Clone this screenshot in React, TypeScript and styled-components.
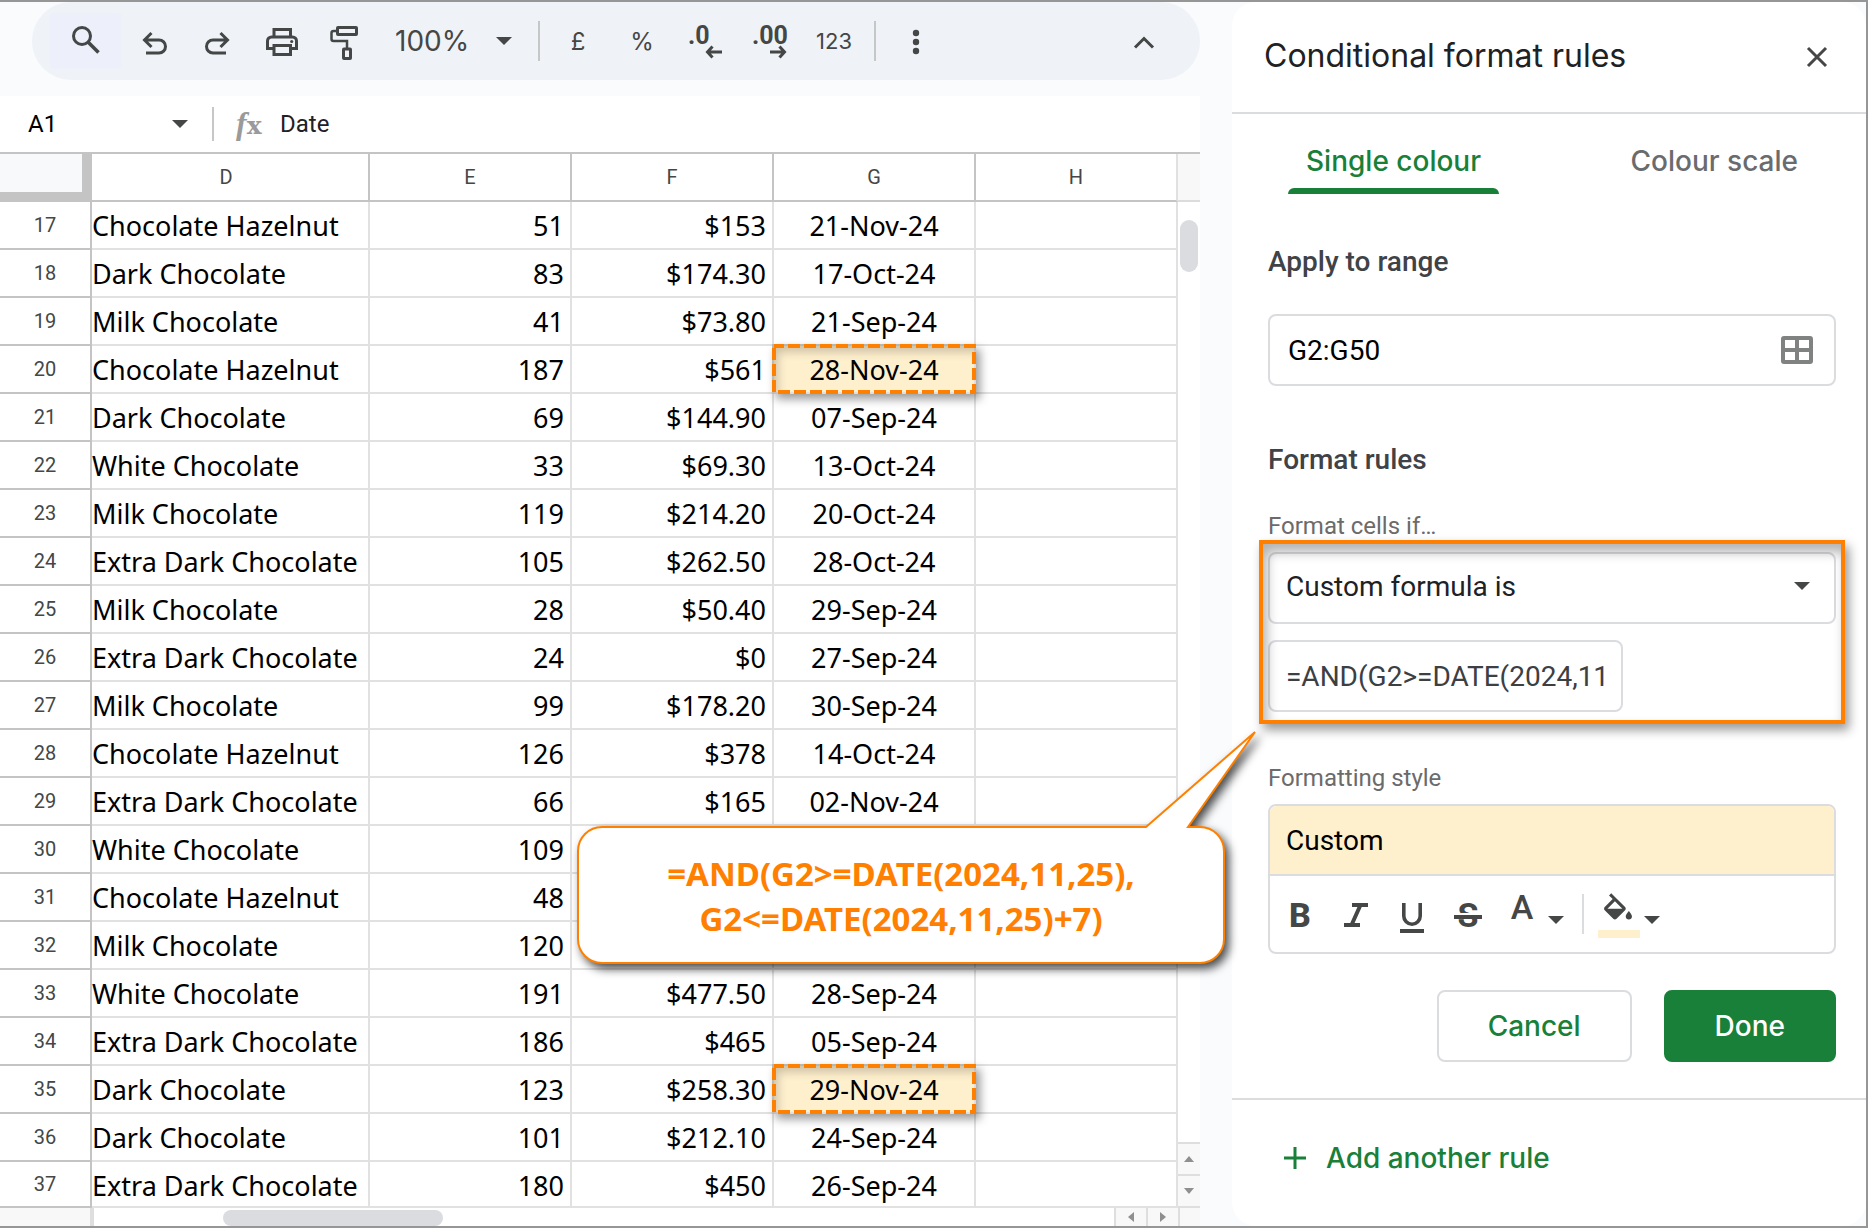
import React, { ReactNode } from "react";
import styled, { createGlobalStyle, css } from "styled-components";

const ui = `Roboto, "Liberation Sans", sans-serif`;
const display = `Inter, Roboto, sans-serif`;
const cellFont = `"Noto Sans", "Open Sans", sans-serif`;
const ink = "#444746";
const green = "#188038";
const orange = "#ff8000";
const outline = "#dadce0";
const gridLine = "#e1e1e1";
const headLine = "#c4c4c4";
const canvas = "#f9fbfd";
const highlight = "#fff0cd";

const GlobalStyle = createGlobalStyle`
  * { box-sizing: border-box; }
  body { margin: 0; font-family: ${ui}; background: ${canvas}; }
  button, input, select { font-family: inherit; margin: 0; padding: 0; border: 0; background: none; color: inherit; }
  button { cursor: pointer; }
  h1, h2, p { margin: 0; }
`;

/* ---------- page ---------- */

const Page = styled.div`
  display: flex;
  gap: 32px;
  min-height: 100vh;
  overflow: hidden;
  background: ${canvas};
  border: 2px solid #969696;
  border-left: 0;
`;

const Workspace = styled.main`
  flex: 1;
  min-width: 0;
  display: flex;
  flex-direction: column;
`;

/* ---------- toolbar ---------- */

const Toolbar = styled.div`
  display: flex;
  align-items: center;
  height: 78px;
  margin: 0 0 16px 32px;
  padding: 0 24px 0 18px;
  border-radius: 39px;
  background: #eff2f7;
  color: ${ink};
`;

const ToolButton = styled.button<{ $active?: boolean; $end?: boolean; $small?: boolean }>`
  display: flex;
  align-items: center;
  justify-content: center;
  flex: none;
  width: 64px;
  height: 56px;
  font-family: ${display};
  font-size: ${(p) => (p.$small ? 22 : 24)}px;
  border-radius: 4px;
  ${(p) => p.$end && css`margin-left: auto;`}
  ${(p) =>
    p.$active &&
    css`
      width: 72px;
      background: #edf0fa;
    `}
`;

const ZoomButton = styled.button`
  display: flex;
  align-items: center;
  justify-content: space-between;
  width: 160px;
  height: 56px;
  padding: 0 26px 0 17px;
  font-family: ${display};
  font-size: 28px;
`;

const Divider = styled.span<{ $tall?: boolean; $light?: boolean }>`
  flex: none;
  width: 2px;
  height: ${(p) => (p.$tall ? 40 : 34)}px;
  background: ${(p) => (p.$light ? outline : "#c7c7c7")};
`;

const NumberTools = styled.div`
  display: flex;
  align-items: center;
  gap: 8px;
  margin-left: 6px;
`;

const ButtonRow = styled.div`
  display: flex;
`;

const Glyph = styled.svg`
  display: block;
  flex: none;
  overflow: visible;
  fill: none;
  stroke: currentColor;
  stroke-width: 3;

  .solid {
    fill: currentColor;
    stroke: none;
  }
  text {
    fill: currentColor;
    stroke: none;
    font-family: ${ui};
  }
`;

const Icon = ({ children, w = 40, h = 40 }: { children: ReactNode; w?: number; h?: number }) => (
  <Glyph width={w} height={h} viewBox={`0 0 ${w} ${h}`} aria-hidden="true">
    {children}
  </Glyph>
);

const Caret = () => (
  <Icon w={16} h={8}>
    <path className="solid" d="M0 0h16L8 8z" />
  </Icon>
);

/* ---------- formula bar ---------- */

const FormulaBar = styled.div`
  display: flex;
  align-items: center;
  height: 58px;
  background: #fff;
  border-bottom: 2px solid ${headLine};
`;

const NameBox = styled.div`
  display: flex;
  align-items: center;
  justify-content: space-between;
  width: 212px;
  padding: 0 24px 0 28px;
  color: ${ink};
`;

const NameInput = styled.input`
  width: 100px;
  font-size: 24px;
  color: #000;
`;

const Fx = styled.span`
  width: 44px;
  margin-left: 22px;
  font-family: "DejaVu Serif", serif;
  font-size: 25px;
  font-weight: 700;
  line-height: 32px;
  color: #9a9a9a;

  i {
    font-family: "Liberation Serif", serif;
    font-size: 32px;
  }
`;

const FormulaInput = styled.input`
  flex: 1;
  font-size: 24px;
  color: #202124;
`;

/* ---------- sheet ---------- */

const SheetArea = styled.div`
  display: flex;
  background: #fff;
`;

const Sheet = styled.table`
  flex: 1;
  table-layout: fixed;
  border-spacing: 0;
  width: 100%;
`;

const Col = styled.col<{ $w: number }>`
  width: ${(p) => p.$w}px;
`;

const headCell = css`
  padding: 0;
  font-size: 20px;
  font-weight: 400;
  line-height: 44px;
  color: ${ink};
  border: solid ${headLine};
  border-width: 0 2px 2px 0;
`;

const Corner = styled.td`
  height: 48px;
  padding: 0;
  background: #f8f9fb;
  border: solid ${headLine};
  border-width: 0 10px 10px 0;
`;

const ColumnHead = styled.th`
  ${headCell}
  height: 48px;

  &:nth-child(2) {
    padding-right: 8px;
  }
  &:last-child {
    border-right-color: ${gridLine};
  }
`;

const RowHead = styled.th`
  ${headCell}
`;

const Cell = styled.td<{ $align?: "left" | "right" | "center"; $marked?: boolean }>`
  position: relative;
  height: 48px;
  padding: 4px ${(p) => (p.$align === "right" ? 6 : 0)}px 0 0;
  font-family: ${cellFont};
  font-size: 27px;
  line-height: 40px;
  vertical-align: top;
  white-space: nowrap;
  text-align: ${(p) => p.$align ?? "left"};
  color: #000;
  background: ${(p) => (p.$marked ? highlight : "#fff")};
  border: solid ${gridLine};
  border-width: 0 2px 2px 0;

  tr:last-child > & {
    height: 46px;
  }
`;

const Mark = styled.span`
  position: absolute;
  z-index: 1;
  inset: -2px;
  box-shadow: 4px 5px 9px rgba(0, 0, 0, 0.4), inset 6px 8px 10px rgba(0, 0, 0, 0.2);

  svg {
    display: block;
    width: 100%;
    height: 100%;
  }
  rect {
    x: 2px;
    y: 2px;
    width: calc(100% - 4px);
    height: calc(100% - 4px);
    fill: none;
    stroke: ${orange};
    stroke-width: 4px;
    stroke-dasharray: 12px 4px;
    stroke-dashoffset: 2px;
  }
`;

const VerticalBar = styled.div`
  display: flex;
  flex-direction: column;
  flex: none;
  width: 22px;
  border-bottom: 2px solid #dedede;
`;

const BarHead = styled.div`
  height: 48px;
  background: #f8f8f8;
  border-bottom: 2px solid #dcdcdc;
`;

const Thumb = styled.div<{ $vertical?: boolean }>`
  background: ${outline};
  border-radius: 9px;
  ${(p) =>
    p.$vertical
      ? css`
          width: 18px;
          height: 52px;
          margin: 18px auto auto 2px;
        `
      : css`
          width: 220px;
          height: 16px;
          margin: 2px auto 0 129px;
        `}
`;

const ScrollButton = styled.button<{ $side?: boolean }>`
  display: grid;
  place-items: center;
  width: ${(p) => (p.$side ? "32px" : "100%")};
  height: ${(p) => (p.$side ? "100%" : "32px")};
  color: #8f8f8f;
  background: #f8f8f8;
  border: solid #dedede;
  border-width: ${(p) => (p.$side ? "0 0 0 2px" : "2px 0 0 0")};
`;

const HorizontalBar = styled.div`
  display: flex;
  flex: 1;
  min-height: 18px;
  background: #fff;
`;

const BarStub = styled.div`
  width: 94px;
  background: #f8f8f8;
  border-right: 4px solid #dedede;
`;

const BarCorner = styled.div`
  width: 22px;
  background: #f8f8f8;
  border-left: 2px solid #dedede;
`;

/* ---------- side panel ---------- */

const Panel = styled.aside`
  flex: none;
  width: 634px;
  background: #fff;
  border-radius: 24px;
`;

const PanelHeader = styled.header`
  display: flex;
  align-items: center;
  justify-content: space-between;
  height: 112px;
  padding: 0 39px 0 32px;
  border-bottom: 2px solid ${outline};
`;

const Title = styled.h1`
  padding-bottom: 4px;
  font-family: ${display};
  font-size: 32px;
  font-weight: 400;
  color: #202124;
`;

const CloseButton = styled.button`
  color: ${ink};
`;

const Tabs = styled.div`
  display: flex;
  justify-content: space-between;
  padding: 0 50px 0 56px;
`;

const Tab = styled.button<{ $active?: boolean }>`
  position: relative;
  height: 80px;
  padding: 14px 18px 0;
  font-family: ${display};
  font-size: 28px;
  font-weight: 500;
  color: ${(p) => (p.$active ? green : "#696b6e")};

  &::after {
    content: "";
    display: ${(p) => (p.$active ? "block" : "none")};
    position: absolute;
    inset: auto 0 0;
    height: 6px;
    border-radius: 6px 6px 0 0;
    background: ${green};
  }
`;

const Form = styled.form`
  padding: 52px 30px 36px 36px;
  border-bottom: 2px solid ${outline};
`;

const sectionText = css`
  display: block;
  font-size: 28px;
  font-weight: 500;
  line-height: 32px;
  color: #3f4246;
`;

const RangeLabel = styled.label`
  ${sectionText}
  margin-bottom: 36px;
`;

const SectionTitle = styled.h2`
  && {
    ${sectionText}
    margin: 58px 0 36px;
  }
`;

const Label = styled.label<{ $later?: boolean }>`
  display: block;
  margin: ${(p) => (p.$later ? 52 : 0)}px 0 12px;
  font-size: 24px;
  line-height: 28px;
  color: #6b6b6b;
`;

const boxed = css`
  height: 72px;
  border: 2px solid ${outline};
  border-radius: 8px;
  font-size: 28px;
`;

const RangeBox = styled.div`
  ${boxed}
  display: flex;
  align-items: center;
  padding: 0 21px 0 18px;
`;

const RangeInput = styled.input`
  flex: 1;
  min-width: 0;
  font-size: 28px;
  color: #000;
`;

const RangeButton = styled.button`
  color: #808281;
`;

const Condition = styled.div`
  position: relative;
  display: flex;
  flex-direction: column;
  gap: 16px;
`;

const SelectWrap = styled.div`
  position: relative;
  color: ${ink};

  svg {
    position: absolute;
    right: 26px;
    top: 30px;
    pointer-events: none;
  }
`;

const Select = styled.select`
  && {
    ${boxed}
    width: 100%;
    padding: 0 16px 4px;
    appearance: none;
    color: #202124;
  }
`;

const ValueInput = styled.input`
  && {
    ${boxed}
    width: 355px;
    padding: 0 16px;
    color: #3c4043;
  }
`;

const Spotlight = styled.div`
  position: absolute;
  inset: -12px -9px;
  border: 4px solid ${orange};
  box-shadow: 4px 6px 10px rgba(0, 0, 0, 0.4), inset 4px 8px 12px rgba(0, 0, 0, 0.3);
  pointer-events: none;
`;

const Callout = styled.div`
  position: absolute;
  z-index: 2;
  top: 178px;
  right: calc(100% + 12px);
  width: 680px;
  padding: 97px 32px 3px 2px;

  svg {
    position: absolute;
    inset: 0;
    overflow: visible;
    fill: #fff;
    stroke: ${orange};
    stroke-width: 2;
    filter: drop-shadow(4px 5px 5px rgba(0, 0, 0, 0.7));
  }
`;

const CalloutText = styled.p`
  position: relative;
  padding: 24px 0 22px;
  font-family: ${cellFont};
  font-size: 33px;
  font-weight: 700;
  line-height: 45px;
  text-align: center;
  color: ${orange};
`;

const StyleBox = styled.div`
  border: 2px solid ${outline};
  border-radius: 8px;
  overflow: hidden;
`;

const StylePreview = styled.button`
  && {
    display: block;
    width: 100%;
    height: 70px;
    padding: 0 16px;
    font-size: 28px;
    text-align: left;
    color: #000;
    background: ${highlight};
    border-bottom: 2px solid ${outline};
  }
`;

const StyleTools = styled.div`
  display: flex;
  align-items: center;
  height: 76px;
  padding-left: 2px;
  color: ${ink};
`;

const StyleButton = styled.button`
  display: grid;
  place-items: center;
  width: 56px;
  height: 56px;
`;

const ColourButton = styled.button<{ $wide?: boolean }>`
  display: flex;
  gap: 6px;
  height: 40px;
  padding: 0 18px 0 ${(p) => (p.$wide ? 14 : 6)}px;
`;

const Actions = styled.div`
  display: flex;
  justify-content: flex-end;
  gap: 32px;
  margin-top: 36px;
`;

const ActionButton = styled.button<{ $primary?: boolean }>`
  && {
    ${boxed}
    padding: 0 49px;
    font-family: ${display};
    font-weight: 500;
    color: ${green};
    ${(p) =>
      p.$primary &&
      css`
        color: #fff;
        background: ${green};
        border-color: ${green};
      `}
  }
`;

const AddRule = styled.button`
  display: flex;
  align-items: center;
  gap: 20px;
  height: 56px;
  margin: 30px 52px;
  font-family: ${display};
  font-size: 28px;
  font-weight: 500;
  color: ${green};
`;

/* ---------- data ---------- */

const columns = ["D", "E", "F", "G", "H"];

const rows: [string, number, string, string, boolean?][] = [
  ["Chocolate Hazelnut", 51, "$153", "21-Nov-24"],
  ["Dark Chocolate", 83, "$174.30", "17-Oct-24"],
  ["Milk Chocolate", 41, "$73.80", "21-Sep-24"],
  ["Chocolate Hazelnut", 187, "$561", "28-Nov-24", true],
  ["Dark Chocolate", 69, "$144.90", "07-Sep-24"],
  ["White Chocolate", 33, "$69.30", "13-Oct-24"],
  ["Milk Chocolate", 119, "$214.20", "20-Oct-24"],
  ["Extra Dark Chocolate", 105, "$262.50", "28-Oct-24"],
  ["Milk Chocolate", 28, "$50.40", "29-Sep-24"],
  ["Extra Dark Chocolate", 24, "$0", "27-Sep-24"],
  ["Milk Chocolate", 99, "$178.20", "30-Sep-24"],
  ["Chocolate Hazelnut", 126, "$378", "14-Oct-24"],
  ["Extra Dark Chocolate", 66, "$165", "02-Nov-24"],
  ["White Chocolate", 109, "", ""],
  ["Chocolate Hazelnut", 48, "", ""],
  ["Milk Chocolate", 120, "", ""],
  ["White Chocolate", 191, "$477.50", "28-Sep-24"],
  ["Extra Dark Chocolate", 186, "$465", "05-Sep-24"],
  ["Dark Chocolate", 123, "$258.30", "29-Nov-24", true],
  ["Dark Chocolate", 101, "$212.10", "24-Sep-24"],
  ["Extra Dark Chocolate", 180, "$450", "26-Sep-24"],
];

const FIRST_ROW = 17;

/* ---------- components ---------- */

const TopToolbar = () => (
  <Toolbar role="toolbar" aria-label="Main">
    <ToolButton $active aria-label="Search menus">
      <Icon>
        <circle cx="16" cy="15" r="8.5" />
        <path d="M22 21l10.5 10.5" strokeWidth="3.5" />
      </Icon>
    </ToolButton>
    <ToolButton aria-label="Undo">
      <Icon>
        <path d="M17.5 12l-7 7 7 7M10.5 19H25a6.5 6.5 0 0 1 0 13H12" />
      </Icon>
    </ToolButton>
    <ToolButton aria-label="Redo">
      <Icon>
        <path d="M22.5 12l7 7-7 7M29.5 19H15a6.5 6.5 0 0 0 0 13h13" />
      </Icon>
    </ToolButton>
    <ToolButton aria-label="Print">
      <Icon>
        <path d="M12 16V8.5h16.5V16M11 27.5H5.5V20a4 4 0 0 1 4-4h21a4 4 0 0 1 4 4v7.5H29M12 24.5h16.5v9H12z" />
        <circle className="solid" cx="29.7" cy="20.5" r="1.6" />
      </Icon>
    </ToolButton>
    <ToolButton aria-label="Paint format">
      <Icon>
        <rect x="11.5" y="6.5" width="19" height="7" rx="0.5" />
        <path d="M11 10H7.5a2 2 0 0 0-2 2v6a2 2 0 0 0 2 2H21v7" strokeWidth="2.5" />
        <rect x="17.5" y="28" width="7" height="9.5" rx="0.5" />
      </Icon>
    </ToolButton>
    <ZoomButton aria-label="Zoom">
      100%
      <Caret />
    </ZoomButton>
    <Divider $tall />
    <NumberTools>
      <ButtonRow>
        <ToolButton aria-label="Format as currency">£</ToolButton>
        <ToolButton aria-label="Format as percent">%</ToolButton>
        <ToolButton aria-label="Decrease decimal places">
          <Icon>
            <text x="2" y="23" fontSize="25" fontWeight="700">.0</text>
            <path d="M36 31H22M26.5 25.5L21.5 31l5 5.5" />
          </Icon>
        </ToolButton>
        <ToolButton aria-label="Increase decimal places">
          <Icon>
            <text x="2" y="23" fontSize="25" fontWeight="700">.00</text>
            <path d="M20 31h14M29.5 25.5l5 5.5-5 5.5" />
          </Icon>
        </ToolButton>
        <ToolButton $small aria-label="More formats">123</ToolButton>
      </ButtonRow>
      <Divider $tall />
      <ToolButton aria-label="More">
        <Icon>
          <circle className="solid" cx="20" cy="12" r="3.2" />
          <circle className="solid" cx="20" cy="21" r="3.2" />
          <circle className="solid" cx="20" cy="30" r="3.2" />
        </Icon>
      </ToolButton>
    </NumberTools>
    <ToolButton $end aria-label="Hide the menus">
      <Icon>
        <path d="M11 26.5l9-9 9 9" />
      </Icon>
    </ToolButton>
  </Toolbar>
);

const Spreadsheet = () => (
  <SheetArea>
    <Sheet>
      <colgroup>
        <Col $w={92} />
        <Col $w={278} />
        <Col $w={202} />
        <Col $w={202} />
        <Col $w={202} />
        <Col $w={202} />
      </colgroup>
      <thead>
        <tr>
          <Corner />
          {columns.map((name) => (
            <ColumnHead key={name} scope="col">{name}</ColumnHead>
          ))}
        </tr>
      </thead>
      <tbody>
        {rows.map(([product, qty, total, date, marked], i) => (
          <tr key={i}>
            <RowHead scope="row">{FIRST_ROW + i}</RowHead>
            <Cell>{product}</Cell>
            <Cell $align="right">{qty}</Cell>
            <Cell $align="right">{total}</Cell>
            <Cell $align="center" $marked={marked}>
              {date}
              {marked && (
                <Mark>
                  <svg aria-hidden="true"><rect /></svg>
                </Mark>
              )}
            </Cell>
            <Cell />
          </tr>
        ))}
      </tbody>
    </Sheet>
    <VerticalBar>
      <BarHead />
      <Thumb $vertical />
      <ScrollButton aria-label="Scroll up">
        <Icon w={10} h={6}><path className="solid" d="M0 6h10L5 0z" /></Icon>
      </ScrollButton>
      <ScrollButton aria-label="Scroll down">
        <Icon w={10} h={6}><path className="solid" d="M0 0h10L5 6z" /></Icon>
      </ScrollButton>
    </VerticalBar>
  </SheetArea>
);

const FormatTools = () => (
  <StyleTools role="toolbar" aria-label="Formatting">
    <StyleButton type="button" aria-label="Bold">
      <Icon><text x="20" y="33" fontSize="34" fontWeight="800" textAnchor="middle">B</text></Icon>
    </StyleButton>
    <StyleButton type="button" aria-label="Italic">
      <Icon><path d="M16 11h16M8 31h16M24.5 11l-9 20" strokeWidth="4" /></Icon>
    </StyleButton>
    <StyleButton type="button" aria-label="Underline">
      <Icon>
        <path d="M11.8 9v13a8.2 8.2 0 0 0 16.4 0V9" strokeWidth="3.6" />
        <path d="M8 37h24" strokeWidth="4" />
      </Icon>
    </StyleButton>
    <StyleButton type="button" aria-label="Strikethrough">
      <Icon>
        <text x="20" y="33" fontSize="34" fontWeight="700" textAnchor="middle">S</text>
        <path d="M6 21.5h28" stroke="#fff" strokeWidth="5" />
        <path d="M6 23h28" strokeWidth="4" />
      </Icon>
    </StyleButton>
    <ColourButton type="button" aria-label="Text colour">
      <Icon><text x="20" y="25" fontSize="34" fontWeight="500" textAnchor="middle">A</text></Icon>
      <Icon w={16}><path className="solid" d="M0 22h16l-8 8z" /></Icon>
    </ColourButton>
    <Divider $tall $light />
    <ColourButton type="button" $wide aria-label="Fill colour">
      <Icon>
        <path
          className="solid"
          transform="translate(1.4 -.8) scale(1.55)"
          d="M16.56 8.94L7.62 0 6.21 1.41l2.38 2.38-5.15 5.15c-.59.59-.59 1.54 0 2.12l5.5 5.5c.29.29.68.44 1.06.44s.77-.15 1.06-.44l5.5-5.5c.59-.58.59-1.53 0-2.12zM5.21 10L10 5.21 14.79 10H5.21zM19 11.5s-2 2.17-2 3.5c0 1.1.9 2 2 2s2-.9 2-2c0-1.33-2-3.5-2-3.5z"
        />
        <rect x="0" y="36" width="42" height="8" fill="#fff0cd" stroke="none" />
      </Icon>
      <Icon w={16}><path className="solid" d="M0 22h16l-8 8z" /></Icon>
    </ColourButton>
  </StyleTools>
);

const RulesPanel = () => (
  <Panel>
    <PanelHeader>
      <Title>Conditional format rules</Title>
      <CloseButton aria-label="Close">
        <Icon w={20} h={20}><path d="M1 1l18 18M19 1L1 19" /></Icon>
      </CloseButton>
    </PanelHeader>
    <Tabs role="tablist">
      <Tab role="tab" aria-selected="true" $active>Single colour</Tab>
      <Tab role="tab" aria-selected="false">Colour scale</Tab>
    </Tabs>
    <Form onSubmit={(e) => e.preventDefault()}>
      <RangeLabel htmlFor="range">Apply to range</RangeLabel>
      <RangeBox>
        <RangeInput id="range" defaultValue="G2:G50" />
        <RangeButton type="button" aria-label="Select data range">
          <Icon w={32} h={28}>
            <rect x="2" y="2" width="28" height="24" rx="1" strokeWidth="4" />
            <path d="M16 2v24M2 14h28" strokeWidth="4" />
          </Icon>
        </RangeButton>
      </RangeBox>
      <SectionTitle>Format rules</SectionTitle>
      <Label htmlFor="condition">Format cells if…</Label>
      <Condition>
        <SelectWrap>
          <Select id="condition" defaultValue="custom">
            <option value="custom">Custom formula is</option>
          </Select>
          <Caret />
        </SelectWrap>
        <ValueInput aria-label="Value or formula" defaultValue="=AND(G2>=DATE(2024,11" />
        <Spotlight />
        <Callout>
          <svg width="680" height="236" viewBox="0 0 680 236" aria-hidden="true">
            <path d="M26 97H570L679 2 612 97H624a24 24 0 0 1 24 24V209a24 24 0 0 1-24 24H26a24 24 0 0 1-24-24V121a24 24 0 0 1 24-24z" />
          </svg>
          <CalloutText>
            =AND(G2&gt;=DATE(2024,11,25),
            <br />
            G2&lt;=DATE(2024,11,25)+7)
          </CalloutText>
        </Callout>
      </Condition>
      <Label $later htmlFor="preview">Formatting style</Label>
      <StyleBox>
        <StylePreview id="preview" type="button">Custom</StylePreview>
        <FormatTools />
      </StyleBox>
      <Actions>
        <ActionButton type="button">Cancel</ActionButton>
        <ActionButton type="submit" $primary>Done</ActionButton>
      </Actions>
    </Form>
    <AddRule>
      <Icon w={22} h={22}><path d="M11 0v22M0 11h22" /></Icon>
      Add another rule
    </AddRule>
  </Panel>
);

export default function App() {
  return (
    <>
      <GlobalStyle />
      <Page>
        <Workspace>
          <TopToolbar />
          <FormulaBar>
            <NameBox>
              <NameInput aria-label="Name box" defaultValue="A1" />
              <Caret />
            </NameBox>
            <Divider />
            <Fx aria-hidden="true"><i>f</i>x</Fx>
            <FormulaInput aria-label="Formula" defaultValue="Date" />
          </FormulaBar>
          <Spreadsheet />
          <HorizontalBar>
            <BarStub />
            <Thumb />
            <ScrollButton $side aria-label="Scroll left">
              <Icon w={6} h={10}><path className="solid" d="M6 0v10L0 5z" /></Icon>
            </ScrollButton>
            <ScrollButton $side aria-label="Scroll right">
              <Icon w={6} h={10}><path className="solid" d="M0 0v10l6-5z" /></Icon>
            </ScrollButton>
            <BarCorner />
          </HorizontalBar>
        </Workspace>
        <RulesPanel />
      </Page>
    </>
  );
}
